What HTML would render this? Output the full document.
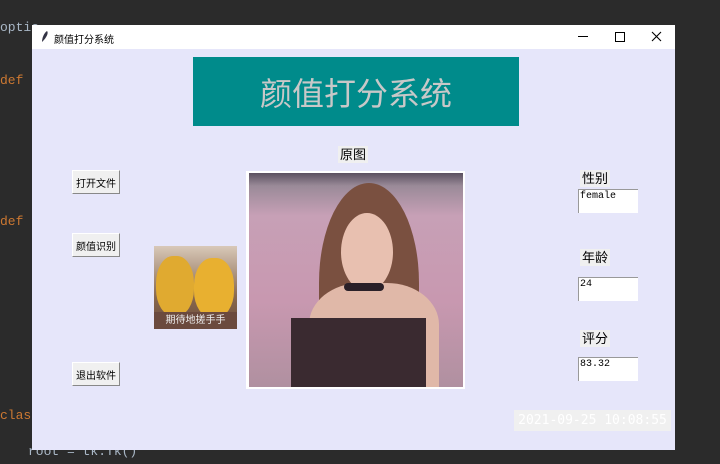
<!DOCTYPE html>
<html><head><meta charset="utf-8"><style>
*{margin:0;padding:0;box-sizing:border-box}
body{width:720px;height:464px;background:#2b2b2b;position:relative;overflow:hidden;font-family:"Liberation Sans","Noto Sans CJK SC",sans-serif}
.a{position:absolute}
.code{font-family:"Liberation Mono",monospace;font-size:13px;color:#a9b7c6;white-space:pre}
.kw{color:#cc7832}
.win{left:32px;top:25px;width:643px;height:425px;background:#e6e6fa}
.title{left:32px;top:25px;width:643px;height:24px;background:#fff;font-size:10px;color:#000}
.btn{background:#f0f0f0;border:1px solid #fff;border-right-color:#888;border-bottom-color:#888;font-size:10px;display:flex;align-items:center;justify-content:center;color:#000;width:48px;height:24px;left:72px}
.lbl{background:#f0f0f0;font-size:13px;color:#000;padding:0 2px;line-height:17px}
.ent{background:#fff;border-top:1px solid #999;border-left:1px solid #999;width:60px;height:24px;left:578px;font-family:"Liberation Mono",monospace;font-size:10px;padding:1px 1px;color:#000}
</style></head><body>
<div class="a code" style="left:0;top:20px">optio</div>
<div class="a code" style="left:0;top:73px"><span class="kw">def</span> g</div>
<div class="a code" style="left:0;top:214px"><span class="kw">def</span> f</div>
<div class="a code" style="left:0;top:408px"><span class="kw">class</span></div>
<div class="a code" style="left:28px;top:444px">root = tk.Tk()</div>
<div class="a win"></div>
<div class="a title">
 <svg class="a" style="left:9px;top:5px" width="8" height="13" viewBox="0 0 8 13"><path d="M6 1 C8 3 5 8 2 11 L1 12 C1 8 3 3 6 1Z" fill="#334"/></svg>
 <span class="a" style="left:22px;top:6px">颜值打分系统</span>
 <div class="a" style="left:546px;top:11px;width:10px;height:1px;background:#000"></div>
 <div class="a" style="left:583px;top:7px;width:10px;height:10px;border:1px solid #000"></div>
 <svg class="a" style="left:619px;top:6px" width="11" height="11" viewBox="0 0 11 11"><path d="M1 1L10 10M10 1L1 10" stroke="#000" stroke-width="1.1"/></svg>
</div>
<div class="a" style="left:193px;top:57px;width:326px;height:69px;background:#008b8b;color:#c8c8c8;font-size:32px;display:flex;align-items:center;justify-content:center">颜值打分系统</div>
<div class="a lbl" style="left:338px;top:146px">原图</div>
<div class="a btn" style="top:170px">打开文件</div>
<div class="a btn" style="top:233px">颜值识别</div>
<div class="a btn" style="top:362px">退出软件</div>
<div class="a" style="left:154px;top:246px;width:83px;height:83px;background:linear-gradient(#d8c8b8,#8a6a50 60%,#6a4a3a);overflow:hidden">
 <div class="a" style="left:2px;top:10px;width:38px;height:60px;border-radius:45%;background:#e0aa30"></div>
 <div class="a" style="left:40px;top:12px;width:40px;height:60px;border-radius:45%;background:#e8b030"></div>
 <div class="a" style="left:0;top:66px;width:83px;height:17px;background:#6b4a3e;color:#eee;font-size:10px;text-align:center;line-height:17px">期待地搓手手</div>
</div>
<div class="a" style="left:246px;top:171px;width:219px;height:218px;background:#fff"></div>
<div class="a" style="left:249px;top:173px;width:214px;height:214px;overflow:hidden;background:linear-gradient(#5a5060 0%,#9a8a98 6%,#c7a0b6 20%,#c898b0 60%,#b090a0 100%)">
 <div class="a" style="left:70px;top:10px;width:100px;height:200px;border-radius:50% 50% 20% 20%;background:#7a5040"></div>
 <div class="a" style="left:92px;top:40px;width:52px;height:78px;border-radius:50%;background:#e8c0b0"></div>
 <div class="a" style="left:60px;top:110px;width:130px;height:104px;border-radius:40% 40% 0 0;background:#e0b8a8"></div>
 <div class="a" style="left:42px;top:145px;width:135px;height:70px;background:#3a2a30"></div>
 <div class="a" style="left:95px;top:110px;width:40px;height:8px;background:#2a2028;border-radius:4px"></div>
</div>
<div class="a lbl" style="left:580px;top:170px">性别</div>
<div class="a ent" style="top:189px">female</div>
<div class="a lbl" style="left:580px;top:249px">年龄</div>
<div class="a ent" style="top:277px">24</div>
<div class="a lbl" style="left:580px;top:330px">评分</div>
<div class="a ent" style="top:357px">83.32</div>
<div class="a" style="left:514px;top:410px;width:157px;height:21px;background:#f0f0f0;color:#fff;font-size:13px;font-family:'DejaVu Sans Mono',monospace;line-height:21px;text-align:center">2021-09-25 10:08:55</div>
</body></html>
